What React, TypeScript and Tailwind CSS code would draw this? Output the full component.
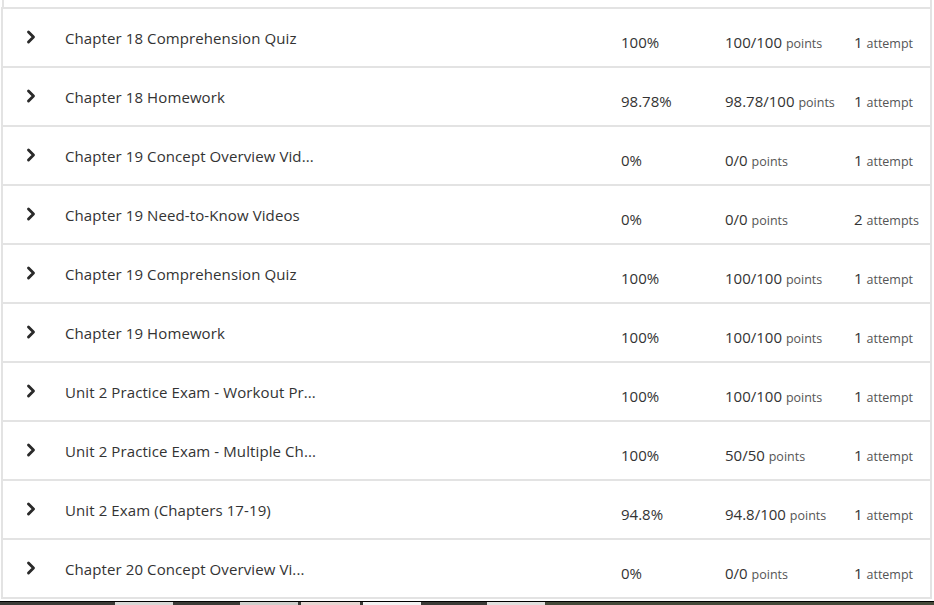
import { ChevronRight } from "lucide-react";

type Row = { title: string; pct: string; score: string; attempts: number };

const rows: Row[] = [
  { title: "Chapter 18 Comprehension Quiz", pct: "100%", score: "100/100", attempts: 1 },
  { title: "Chapter 18 Homework", pct: "98.78%", score: "98.78/100", attempts: 1 },
  { title: "Chapter 19 Concept Overview Vid...", pct: "0%", score: "0/0", attempts: 1 },
  { title: "Chapter 19 Need-to-Know Videos", pct: "0%", score: "0/0", attempts: 2 },
  { title: "Chapter 19 Comprehension Quiz", pct: "100%", score: "100/100", attempts: 1 },
  { title: "Chapter 19 Homework", pct: "100%", score: "100/100", attempts: 1 },
  { title: "Unit 2 Practice Exam - Workout Pr...", pct: "100%", score: "100/100", attempts: 1 },
  { title: "Unit 2 Practice Exam - Multiple Ch...", pct: "100%", score: "50/50", attempts: 1 },
  { title: "Unit 2 Exam (Chapters 17-19)", pct: "94.8%", score: "94.8/100", attempts: 1 },
  { title: "Chapter 20 Concept Overview Vi...", pct: "0%", score: "0/0", attempts: 1 },
];

function AttemptRow({ r }: { r: Row }) {
  return (
    <div className="flex h-[59px] border-t-2 border-[#e3e3e3] border-l-2 border-r-2">
      <div className="flex w-[62px] items-center pl-[18px] pb-[1px]">
        <ChevronRight size={20} strokeWidth={3.4} className="text-[#2a2a2a]" />
      </div>
      <div className="w-[556px] pt-[18px] text-[15px] tracking-[0.1px] text-[#333]">{r.title}</div>
      <div className="w-[104px] pt-[22px] text-[15px] text-[#333]">{r.pct}</div>
      <div className="w-[129px] pt-[22px] text-[15px] text-[#333]">
        {r.score} <span className="text-[12.5px] text-[#555]">points</span>
      </div>
      <div className="pt-[22px] text-[15px] text-[#333]">
        {r.attempts} <span className="text-[12.5px] text-[#555]">{r.attempts === 1 ? "attempt" : "attempts"}</span>
      </div>
    </div>
  );
}

export default function App() {
  return (
    <div className="h-[605px] w-[934px] overflow-hidden bg-white font-['Open_Sans',sans-serif]">
      <div className="flex h-[7px] justify-between px-[2px]">
        <div className="w-[2px] bg-[#e3e3e3]" />
        <div className="w-[2px] bg-[#e3e3e3]" />
      </div>
      <div className="ml-[1px] w-[931px]">
        {rows.map((r) => (
          <AttemptRow key={r.title} r={r} />
        ))}
        <div className="h-[2px] bg-[#e3e3e3]" />
      </div>
      <div className="mt-[2px] flex h-[5px] border-t border-black bg-[#3b3b37]">
        <div className="w-[115px]" />
        <div className="w-[58px] bg-[#d8d8d6]" />
        <div className="w-[67px]" />
        <div className="w-[58px] bg-[#cfcfcc]" />
        <div className="w-[3px]" />
        <div className="w-[59px] bg-[#e6d6d2]" />
        <div className="w-[3px]" />
        <div className="w-[58px] bg-[#f2f2f2]" />
        <div className="w-[66px]" />
        <div className="w-[58px] bg-[#e0e0de]" />
        <div className="flex-1 bg-[#454a3a]" />
      </div>
    </div>
  );
}
